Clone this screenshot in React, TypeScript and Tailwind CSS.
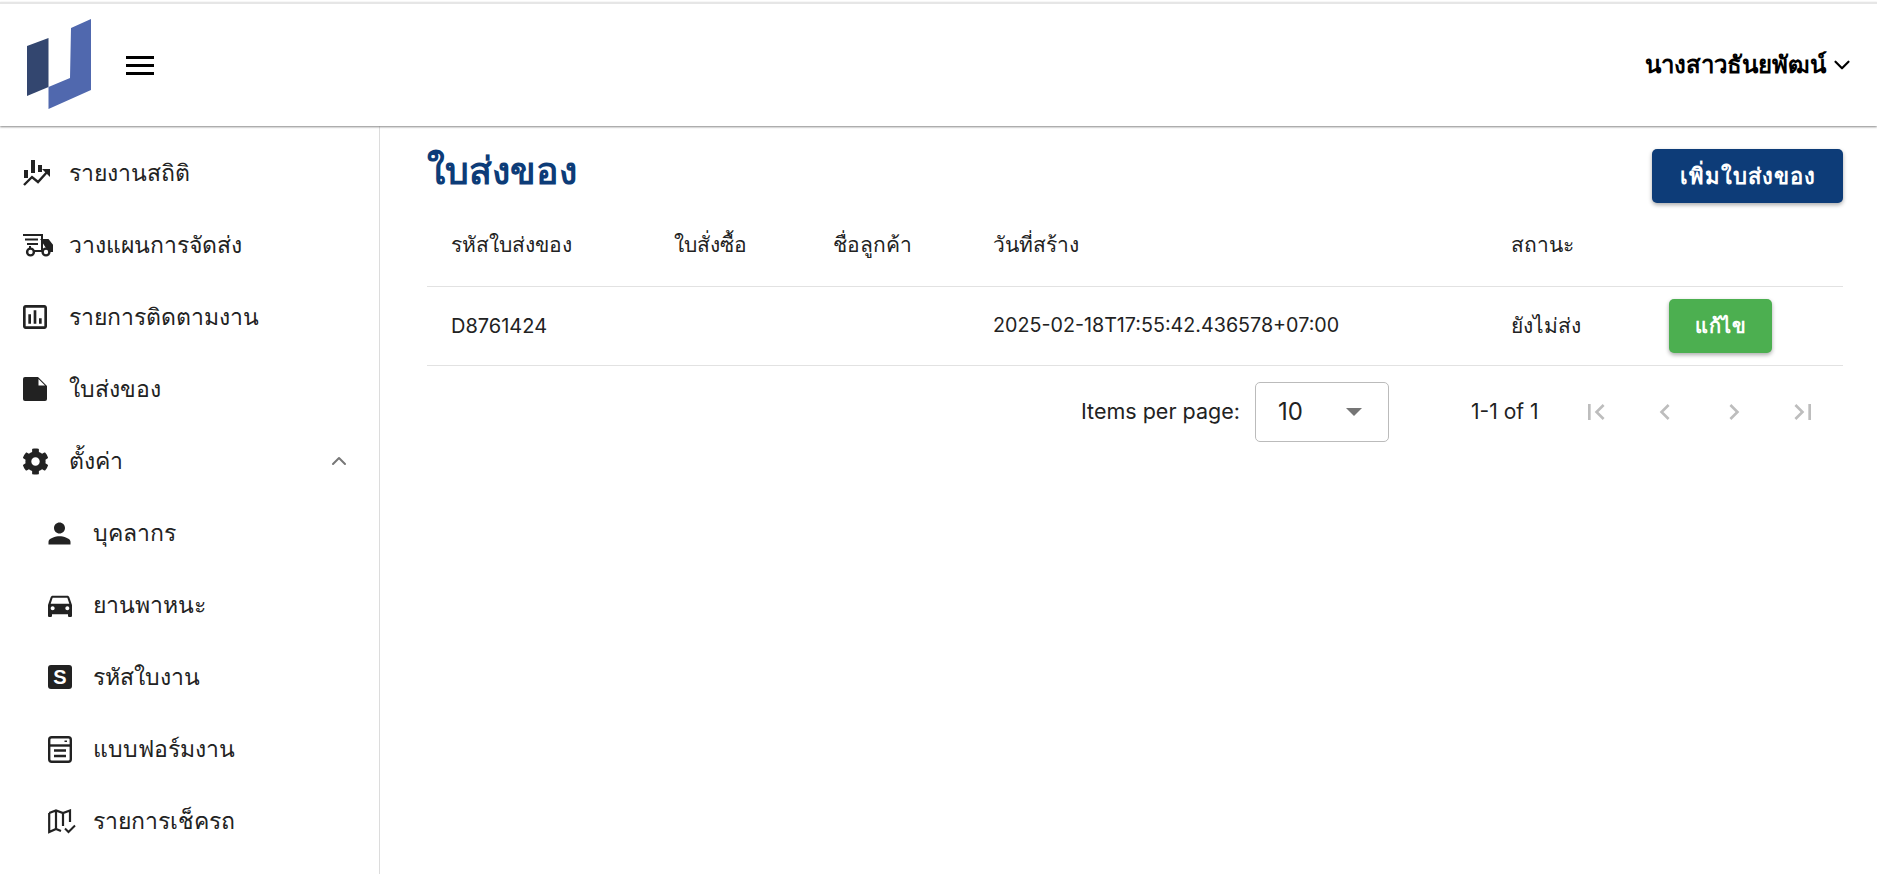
import React from 'react';
import { ChevronDown, ChevronUp } from 'lucide-react';
import { MdOutlineAssessment, MdPerson, MdDirectionsCar, MdFirstPage, MdLastPage, MdChevronLeft, MdChevronRight } from 'react-icons/md';
import { FaCog } from 'react-icons/fa';

const Logo = () => (
  <svg width="66" height="92" viewBox="0 0 66 92">
    <polygon points="0,27 21.5,19 21.5,68 0,77" fill="#33466f" />
    <polygon points="44,9 64,0 64,71 21.5,90 21.5,68 43,59" fill="#5068ae" />
  </svg>
);

const StatsIcon = () => (
  <svg width="28" height="28" viewBox="0 0 28 28" fill="#222">
    <rect x="1" y="11" width="4" height="8" />
    <rect x="8" y="1" width="4" height="13" />
    <rect x="15" y="6" width="4" height="7" />
    <path d="M1 26 L9 18 L15 23 L25 12" fill="none" stroke="#222" strokeWidth="2.4" />
    <path d="M19 10 h8 v8 z" />
  </svg>
);

const TruckIcon = () => (
  <svg width="30" height="24" viewBox="0 0 30 24" fill="none" stroke="#222" strokeWidth="2">
    <path d="M0 2 H19 V18 H11" />
    <path d="M2 6.5 H15 M4 11 H15" />
    <path d="M7 13 V18" />
    <path d="M19 7 H25 L29 12 V18 H26 Z" fill="#222" />
    <circle cx="7.5" cy="19" r="3.4" fill="#fff" strokeWidth="2.4" />
    <circle cx="23" cy="19" r="3.4" fill="#fff" strokeWidth="2.4" />
  </svg>
);

const FileIcon = () => (
  <svg width="24" height="24" viewBox="0 0 24 24" fill="#222">
    <path d="M2 0 H15 L24 9 V22 a2 2 0 0 1 -2 2 H2 a2 2 0 0 1 -2 -2 V2 a2 2 0 0 1 2 -2 Z" />
    <path d="M15.5 2 L22 8.5 H15.5 Z" fill="#fff" />
  </svg>
);

const FormIcon = () => (
  <svg width="24" height="27" viewBox="0 0 24 27" fill="none" stroke="#222" strokeWidth="2.4">
    <rect x="1.2" y="1.2" width="21.6" height="24.6" rx="2.5" />
    <path d="M1 9.5 H23" />
    <path d="M6 14.5 H18 M6 20 H18" />
    <rect x="16.5" y="4.5" width="2.5" height="1.5" fill="#222" stroke="none" />
  </svg>
);

const MapIcon = () => (
  <svg width="28" height="25" viewBox="0 0 28 25" fill="none" stroke="#222" strokeWidth="2.2">
    <path d="M1.2 4 L8 1.5 L15 4 L22 1.5 V13 M8 1.5 V20 M15 4 V17 M1.2 4 V23 L8 20 L13 22" />
    <path d="M17 19.5 L20.5 23 L27 16.5" strokeWidth="2" />
  </svg>
);

const nav = [
  { label: 'รายงานสถิติ', icon: <StatsIcon /> },
  { label: 'วางแผนการจัดส่ง', icon: <TruckIcon /> },
  { label: 'รายการติดตามงาน', icon: <span className="-ml-[4px]"><MdOutlineAssessment size={32} color="#222" /></span> },
  { label: 'ใบส่งของ', icon: <FileIcon /> },
];

const sub = [
  { label: 'บุคลากร', icon: <span className="-ml-[5px]"><MdPerson size={33} color="#222" /></span> },
  { label: 'ยานพาหนะ', icon: <span className="-ml-[4px]"><MdDirectionsCar size={32} color="#222" /></span> },
  {
    label: 'รหัสใบงาน',
    icon: <span className="flex h-6 w-6 items-center justify-center rounded-[3px] bg-[#222] font-['Liberation_Sans',sans-serif] text-[20px] font-bold text-white">S</span>,
  },
  { label: 'แบบฟอร์มงาน', icon: <FormIcon /> },
  { label: 'รายการเช็ครถ', icon: <MapIcon /> },
];

const NavRow = ({ label, icon, indent, right }: { label: string; icon: React.ReactNode; indent?: boolean; right?: React.ReactNode }) => (
  <div className={`flex h-[72px] items-center text-[23px] text-[#222] ${indent ? 'pl-[48px]' : 'pl-[23px]'}`}>
    <span className={`flex items-center ${indent ? 'w-[45px]' : 'w-[46px]'}`}>{icon}</span>
    <span>{label}</span>
    {right}
  </div>
);

export default function App() {
  return (
    <div className="flex h-[874px] flex-col overflow-hidden bg-white pt-[2px] font-['Inter','Noto_Sans',sans-serif]">
      <header className="z-10 flex h-[124px] items-center justify-between border-t-[2px] border-[#e6e6e6] bg-white pr-[22px] shadow-[0_1px_2px_#888]">
        <div className="flex items-center pl-[27px]">
          <Logo />
          <div className="ml-[33px] flex w-[28px] flex-col gap-[5px]">
            <div className="h-[3px] bg-black" />
            <div className="h-[3px] bg-black" />
            <div className="h-[3px] bg-black" />
          </div>
        </div>
        <div className="flex items-center gap-[3px] text-[24px] font-bold text-black">
          นางสาวธันยพัฒน์
          <ChevronDown size={26} strokeWidth={2} />
        </div>
      </header>
      <div className="flex flex-1">
        <aside className="w-[380px] shrink-0 border-r border-[#dcdcdc] pt-[11px]">
          {nav.map((n) => (
            <NavRow key={n.label} {...n} />
          ))}
          <NavRow
            label="ตั้งค่า"
            icon={<span className="-ml-[1px]"><FaCog size={27} color="#222" /></span>}
            right={<ChevronUp size={24} className="ml-auto mr-[28px] text-[#777]" />}
          />
          {sub.map((n) => (
            <NavRow key={n.label} {...n} indent />
          ))}
        </aside>
        <main className="flex-1 pl-[47px] pr-[34px] pt-[23px]">
          <div className="flex items-start justify-between">
            <h1 className="text-[37.5px] font-bold leading-[44px] text-[#0d3c78]">ใบส่งของ</h1>
            <button className="h-[54px] w-[191px] rounded-[5px] bg-[#0d3c78] text-[22px] font-semibold tracking-[1px] text-white shadow-[0_2px_4px_#0005]">
              เพิ่มใบส่งของ
            </button>
          </div>
          <table className="w-[1416px] table-fixed text-left text-[21px] text-[#222]">
            <colgroup>
              <col className="w-[223px]" />
              <col className="w-[159px]" />
              <col className="w-[160px]" />
              <col className="w-[518px]" />
              <col className="w-[157px]" />
              <col />
            </colgroup>
            <thead>
              <tr className="h-[83px] border-b border-[#e2e2e2]">
                <th className="pl-[24px] font-medium">รหัสใบส่งของ</th>
                <th className="pl-[24px] font-medium">ใบสั่งซื้อ</th>
                <th className="pl-[24px] font-medium">ชื่อลูกค้า</th>
                <th className="pl-[24px] font-medium">วันที่สร้าง</th>
                <th className="pl-[24px] font-medium">สถานะ</th>
                <th />
              </tr>
            </thead>
            <tbody>
              <tr className="h-[79px] border-b border-[#e2e2e2]">
                <td className="pl-[24px] text-[20px]">D8761424</td>
                <td />
                <td />
                <td className="pl-[24px] text-[19.7px]">2025-02-18T17:55:42.436578+07:00</td>
                <td className="pl-[24px]">ยังไม่ส่ง</td>
                <td className="pl-[25px]">
                  <button className="h-[54px] w-[103px] rounded-[5px] bg-[#4caf50] text-[20px] font-semibold tracking-[0.5px] text-white shadow-[0_2px_4px_#0005]">
                    แก้ไข
                  </button>
                </td>
              </tr>
            </tbody>
          </table>
          <div className="mt-[15px] flex h-[62px] w-[1416px] items-center text-[20px] text-[#222]">
            <span className="ml-[654px] w-[161px] whitespace-nowrap text-[21.5px]">Items per page:</span>
            <div className="ml-[13px] flex h-[60px] w-[134px] items-center justify-between rounded-[5px] border border-[#bbb] pl-[22px] pr-[26px] text-[24px]">
              10
              <span className="h-0 w-0 border-x-[8px] border-t-[8px] border-x-transparent border-t-[#757575]" />
            </div>
            <span className="ml-[82px] w-[68px] whitespace-nowrap text-[21px]">1-1 of 1</span>
            <div className="ml-[22px] flex text-[#bdbdbd]">
              <span className="flex w-[69px] justify-center"><MdFirstPage size={32} /></span>
              <span className="flex w-[69px] justify-center"><MdChevronLeft size={32} /></span>
              <span className="flex w-[69px] justify-center"><MdChevronRight size={32} /></span>
              <span className="flex w-[69px] justify-center"><MdLastPage size={32} /></span>
            </div>
          </div>
        </main>
      </div>
    </div>
  );
}
